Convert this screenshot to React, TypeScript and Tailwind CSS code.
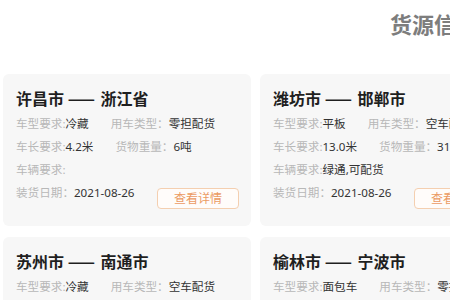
import React from 'react'

type Cargo = {
  from: string
  to: string
  model: string
  useType: string
  length: string
  weight: string
  extra: string
  date: string
}

const cargos: Cargo[] = [
  { from: '许昌市', to: '浙江省', model: '冷藏', useType: '零担配货', length: '4.2米', weight: '6吨', extra: '', date: '2021-08-26' },
  { from: '潍坊市', to: '邯郸市', model: '平板', useType: '空车配货', length: '13.0米', weight: '31吨', extra: '绿通,可配货', date: '2021-08-26' },
  { from: '苏州市', to: '南通市', model: '冷藏', useType: '空车配货', length: '9.6米', weight: '12吨', extra: '', date: '2021-08-26' },
  { from: '榆林市', to: '宁波市', model: '面包车', useType: '零担配货', length: '4.2米', weight: '2吨', extra: '', date: '2021-08-26' },
]

const font = { fontFamily: '"Noto Sans", "Noto Sans CJK SC", sans-serif' }

function Field({ label, value, className = '' }: { label: string; value: string; className?: string }) {
  return (
    <span className={`whitespace-nowrap ${className}`}>
      <span className="text-[#b8b8b8]">{label}</span>
      <span className="text-[#333]">{value}</span>
    </span>
  )
}

function CargoCard({ c }: { c: Cargo }) {
  return (
    <div className="h-[152px] w-[248px] shrink-0 rounded-[6px] bg-[#f7f7f7] pl-[13px] pr-[12px] pt-[10px]">
      <div
        className="whitespace-nowrap text-[16px] font-bold leading-[28px] text-[#1f1f1f]"
        style={{ fontFamily: '"Noto Sans CJK SC", sans-serif' }}
      >
        {c.from} <span className="tracking-[2px]">——</span> {c.to}
      </div>
      <div className="text-[11.6px] leading-[23px]">
        <div className="flex">
          <Field label="车型要求:" value={c.model} className="mr-[22px]" />
          <Field label="用车类型：" value={c.useType} />
        </div>
        <div className="flex">
          <Field label="车长要求:" value={c.length} className="mr-[22px]" />
          <Field label="货物重量：" value={c.weight} />
        </div>
        <div className="flex">
          <Field label="车辆要求:" value={c.extra} />
        </div>
        <div className="flex items-start justify-between">
          <Field label="装货日期：" value={c.date} />
          <button className="mt-[7px] h-[21px] w-[82px] rounded-[4px] border border-[#f4cfb0] bg-[#fffcfa] text-[12px] leading-[19px] text-[#eb9a63]">
            查看详情
          </button>
        </div>
      </div>
    </div>
  )
}

export default function App() {
  return (
    <div className="h-[300px] w-[450px] overflow-hidden bg-white" style={font}>
      <div className="h-[74px] overflow-hidden pl-[390px] pt-[8px]">
        <div
          className="whitespace-nowrap text-[22px] font-bold leading-[30px] text-[#7d7d7d]"
          style={{ fontFamily: '"Noto Sans CJK SC", sans-serif' }}
        >
          货源信息
        </div>
      </div>
      <div className="flex flex-col gap-[11px] pl-[3px]">
        <div className="flex gap-[9px]">
          <CargoCard c={cargos[0]} />
          <CargoCard c={cargos[1]} />
        </div>
        <div className="flex gap-[9px]">
          <CargoCard c={cargos[2]} />
          <CargoCard c={cargos[3]} />
        </div>
      </div>
    </div>
  )
}
